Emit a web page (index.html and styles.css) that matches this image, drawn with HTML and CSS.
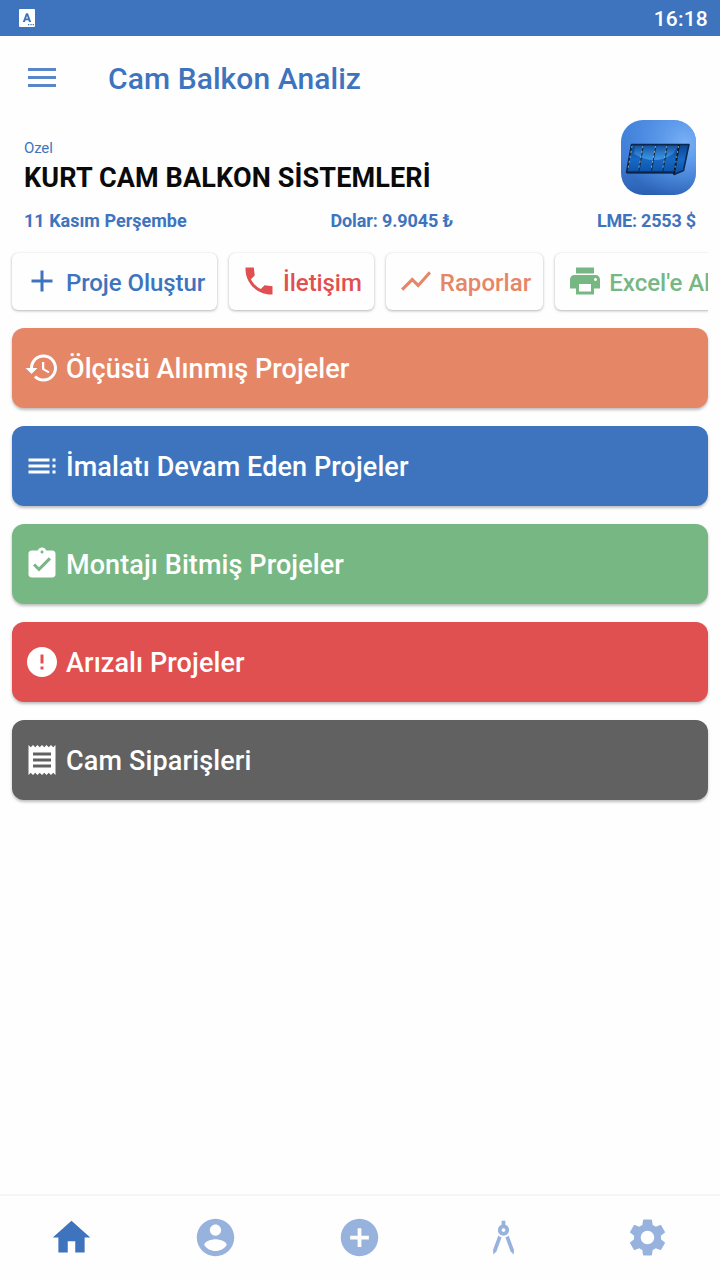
FILE: index.html
```html
<!DOCTYPE html>
<html lang="tr">
<head>
<meta charset="utf-8">
<title>Cam Balkon Analiz</title>
<link rel="stylesheet" href="styles.css">
</head>
<body>
<div class="statusbar">
  <svg class="status-icon" viewBox="0 0 16 18"><rect width="16" height="18" rx="1" fill="#fff"/><path d="M3.800 13 7 4.300h2L12.200 13h-2.200l-.6-1.800H6.600L6 13zM7.100 9.600H8.900L8 6.900z" fill="#3e74be"/><path d="M9 15.700h1.300M11.400 15.700h1.300M13.700 15.700H15" stroke="#3e74be" stroke-width="1.300"/></svg>
  <span class="clock">16:18</span>
</div>
<header class="appbar">
  <svg class="menu" viewBox="0 0 28 19"><path d="M0 0h28v3H0zM0 8h28v3H0zM0 16h28v3H0z"/></svg>
  <h1 class="title">Cam Balkon Analiz</h1>
</header>
<main class="content">
  <section class="company">
    <div class="company-text">
      <div class="plan">Ozel</div>
      <div class="name">KURT CAM BALKON SİSTEMLERİ</div>
    </div>
    <svg class="logo" viewBox="0 0 75 75">
      <defs>
        <linearGradient id="base" x1="0" y1="0" x2="0" y2="1"><stop offset="0" stop-color="#4584da"/><stop offset=".5" stop-color="#4080da"/><stop offset="1" stop-color="#2a60b2"/></linearGradient>
        <radialGradient id="glow" cx=".85" cy=".3" r=".8"><stop offset="0" stop-color="#7ab0f6"/><stop offset="1" stop-color="#5a9cf0" stop-opacity="0"/></radialGradient>
        <linearGradient id="glass" x1="0" y1="0" x2="0" y2="1"><stop offset="0" stop-color="#0d448f"/><stop offset=".5" stop-color="#1769c5"/><stop offset="1" stop-color="#0b4fa5"/></linearGradient>
        <linearGradient id="shine" x1="0" y1="0" x2="0" y2="1"><stop offset="0" stop-color="#4ba5ed" stop-opacity=".15"/><stop offset="1" stop-color="#4ba5ed" stop-opacity=".75"/></linearGradient>
      </defs>
      <rect width="75" height="75" rx="22" fill="url(#base)"/>
      <rect width="75" height="75" rx="22" fill="url(#glow)"/>
      <path d="M10.500 24.500H68L62.500 50.500 53 54.500 52 52.500H5.500z" fill="url(#glass)" stroke="#0a2750" stroke-width="1.500" stroke-linejoin="round"/>
      <path d="M14 26H57L52 34Q34 46 13 34z" fill="url(#shine)"/>
      <path d="M6 52.500H52" stroke="#0b2444" stroke-width="1.800"/>
      <path d="M10.500 25 6.500 50M22.500 25 18 51M35 25 30.500 51M46.500 25 42 51" stroke="#0a2548" stroke-width="1" fill="none"/>
      <path d="M58 25 53 54" stroke="#061932" stroke-width="1.800" fill="none"/>
      <path d="M11 26 7 49M22 26 17.500 50M34.500 26 30 50M46 26 41.500 50M57.500 26 53.500 51" stroke="#d8d5a5" stroke-opacity=".8" stroke-width=".9" stroke-dasharray="2 3" fill="none"/>
    </svg>
  </section>
  <section class="rates">
    <span>11 Kasım Perşembe</span>
    <span class="dollar">Dolar: 9.9045 ₺</span>
    <span class="lme">LME: 2553 $</span>
  </section>
  <nav class="chips">
    <a class="chip blue"><svg viewBox="0 0 24 24"><path d="M19 13h-6v6h-2v-6H5v-2h6V5h2v6h6z"/></svg><span>Proje Oluştur</span></a>
    <a class="chip red"><svg viewBox="0 0 24 24"><path d="M21 15.460l-5.270-.61-2.520 2.520c-2.830-1.440-5.150-3.750-6.590-6.590l2.530-2.530L8.540 3H3.030C2.450 13.180 10.820 21.550 21 20.970v-5.510z"/></svg><span>İletişim</span></a>
    <a class="chip orange"><svg viewBox="0 0 24 24"><path d="M3.500 18.490l6-6.010 4 4L22 6.920l-1.410-1.410-7.090 7.970-4-4L2 16.990z"/></svg><span>Raporlar</span></a>
    <a class="chip green"><svg viewBox="0 0 24 24"><path d="M19 8H5c-1.660 0-3 1.340-3 3v6h4v4h12v-4h4v-6c0-1.660-1.340-3-3-3zm-3 11H8v-5h8v5zm3-7c-.55 0-1-.45-1-1s.45-1 1-1 1 .45 1 1-.45 1-1 1zm-1-9H6v4h12V3z"/></svg><span>Excel'e Aktar</span></a>
  </nav>
  <section class="cards">
    <a class="card bg-orange"><svg viewBox="0 0 24 24"><path d="M13 3c-4.970 0-9 4.030-9 9H1l3.890 3.890.07.14L9 12H6c0-3.870 3.130-7 7-7s7 3.130 7 7-3.130 7-7 7c-1.930 0-3.680-.79-4.940-2.060l-1.420 1.420C8.270 19.990 10.510 21 13 21c4.970 0 9-4.030 9-9s-4.030-9-9-9zm-1 5v5l4.280 2.540.72-1.210-3.500-2.080V8H12z"/></svg><span>Ölçüsü Alınmış Projeler</span></a>
    <a class="card bg-blue"><svg viewBox="0 0 24 24"><path d="M3 9h14V7H3v2zm0 4h14v-2H3v2zm0 4h14v-2H3v2zm16 0h2v-2h-2v2zm0-10v2h2V7h-2zm0 6h2v-2h-2v2z"/></svg><span>İmalatı Devam Eden Projeler</span></a>
    <a class="card bg-green"><svg viewBox="0 0 24 24"><path fill-rule="evenodd" d="M19 3h-4.180C14.400 1.840 13.300 1 12 1s-2.400.84-2.820 2H5c-1.100 0-2 .9-2 2v14c0 1.100.9 2 2 2h14c1.100 0 2-.9 2-2V5c0-1.100-.9-2-2-2zm-7 0c.55 0 1 .45 1 1s-.45 1-1 1-1-.45-1-1 .45-1 1-1zm-2 14l-4-4 1.410-1.410L10 14.170l6.590-6.590L18 9l-8 8z"/></svg><span>Montajı Bitmiş Projeler</span></a>
    <a class="card bg-red"><svg viewBox="0 0 24 24"><path d="M12 2C6.480 2 2 6.480 2 12s4.480 10 10 10 10-4.480 10-10S17.520 2 12 2zm1 15h-2v-2h2v2zm0-4h-2V7h2v6z"/></svg><span>Arızalı Projeler</span></a>
    <a class="card bg-gray"><svg viewBox="0 0 24 24"><path d="M18 17H6v-2h12v2zm0-4H6v-2h12v2zm0-4H6V7h12v2zM3 22l1.500-1.500L6 22l1.500-1.500L9 22l1.500-1.500L12 22l1.500-1.500L15 22l1.500-1.500L18 22l1.500-1.500L21 22V2l-1.500 1.500L18 2l-1.500 1.500L15 2l-1.500 1.500L12 2l-1.500 1.500L9 2 7.500 3.500 6 2 4.500 3.500 3 2v20z"/></svg><span>Cam Siparişleri</span></a>
  </section>
</main>
<nav class="tabbar">
  <a class="tab active"><svg viewBox="0 0 24 24"><path d="M10 20v-6h4v6h5v-8h3L12 3 2 12h3v8z"/></svg></a>
  <a class="tab"><svg viewBox="0 0 24 24"><path fill-rule="evenodd" d="M12 2C6.480 2 2 6.480 2 12s4.480 10 10 10 10-4.480 10-10S17.520 2 12 2zm0 3c1.660 0 3 1.340 3 3s-1.340 3-3 3-3-1.340-3-3 1.340-3 3-3zm0 14.200c-2.500 0-4.710-1.280-6-3.220.03-1.990 4-3.080 6-3.080 1.990 0 5.970 1.090 6 3.080-1.290 1.940-3.500 3.220-6 3.220z"/></svg></a>
  <a class="tab"><svg viewBox="0 0 24 24"><path d="M12 2C6.480 2 2 6.480 2 12s4.480 10 10 10 10-4.480 10-10S17.520 2 12 2zm5 11h-4v4h-2v-4H7v-2h4V7h2v4h4v2z"/></svg></a>
  <a class="tab"><svg viewBox="0 0 24 24"><path fill-rule="evenodd" d="M6.360 18.780L6.610 21l1.620-1.540 2.770-7.600c-.68-.17-1.280-.51-1.770-.98l-2.870 7.900zM14.770 10.880c-.49.47-1.100.81-1.770.98l2.770 7.600L17.390 21l.25-2.220-2.870-7.900zM15 8c0-1.300-.84-2.400-2-2.820V3h-2v2.180C9.840 5.600 9 6.700 9 8c0 1.660 1.340 3 3 3s3-1.340 3-3zM12 9c-.55 0-1-.45-1-1s.45-1 1-1 1 .45 1 1-.45 1-1 1z"/></svg></a>
  <a class="tab"><svg viewBox="0 0 24 24"><path d="M19.140 12.940c.04-.3.06-.61.06-.94 0-.32-.02-.64-.07-.94l2.030-1.580c.18-.14.23-.41.12-.61l-1.920-3.320c-.12-.22-.37-.29-.59-.22l-2.390.96c-.5-.38-1.030-.7-1.620-.94l-.36-2.540c-.04-.24-.24-.41-.48-.41h-3.840c-.24 0-.43.17-.47.41l-.36 2.540c-.59.24-1.130.57-1.620.94l-2.390-.96c-.22-.08-.47 0-.59.22L2.740 8.870c-.12.21-.08.47.12.61l2.030 1.580c-.05.3-.09.63-.09.94s.02.64.07.94l-2.030 1.580c-.18.14-.23.41-.12.61l1.920 3.320c.12.22.37.29.59.22l2.390-.96c.5.38 1.030.7 1.620.94l.36 2.540c.05.24.24.41.48.41h3.840c.24 0 .44-.17.47-.41l.36-2.540c.59-.24 1.130-.56 1.620-.94l2.390.96c.22.08.47 0 .59-.22l1.920-3.320c.12-.22.07-.47-.12-.61l-2.010-1.580zM12 15.600c-1.980 0-3.600-1.620-3.600-3.600s1.620-3.600 3.600-3.600 3.600 1.620 3.600 3.600-1.620 3.600-3.600 3.600z"/></svg></a>
</nav>
</body>
</html>
```
FILE: styles.css
```css
* { box-sizing: border-box; }
body {
  margin: 0;
  height: 1280px;
  display: flex;
  flex-direction: column;
  overflow: hidden;
  background: #fefefe;
  color: #3e74be;
  font-family: Roboto, "Noto Sans", sans-serif;
}
svg { display: block; flex: none; fill: currentColor; }
.statusbar {
  height: 36px;
  flex: none;
  padding: 0 12px 0 19px;
  display: flex;
  align-items: center;
  justify-content: space-between;
  background: #3e74be;
  color: #fff;
}
.status-icon { width: 16px; height: 18px; }
.clock { font-size: 21px; font-weight: 500; letter-spacing: 0.2px; line-height: 36px; padding-top: 1px; }
.appbar { height: 84px; flex: none; display: flex; align-items: center; padding-left: 28px; }
.menu { width: 28px; height: 19px; margin-bottom: 1px; color: #5886c8; }
.title { margin: 0 0 0 52px; font-size: 30px; font-weight: 500; letter-spacing: 0.07px; line-height: 36px; padding-top: 2px; }
.content { flex: 1; min-height: 0; padding: 0 12px; }
.company { display: flex; justify-content: space-between; height: 75px; padding: 0 12px; }
.company-text { padding-top: 18px; }
.plan { font-size: 15px; letter-spacing: -0.15px; line-height: 20px; }
.name { font-size: 27px; font-weight: 700; letter-spacing: 0.14px; line-height: 32px; margin-top: 4px; color: #0a0a0a; white-space: nowrap; }
.logo { width: 75px; height: 75px; }
.rates {
  display: flex;
  justify-content: space-between;
  padding: 0 12px;
  margin-top: 15px;
  font-size: 18px;
  font-weight: 700;
  line-height: 22px;
}
.dollar { letter-spacing: -0.12px; }
.lme { letter-spacing: -0.2px; }
.chips { display: flex; gap: 12px; overflow: hidden; margin: 17px 0 0 -4px; padding: 4px 0 6px 4px; }
.chip {
  height: 57px;
  flex: none;
  display: flex;
  align-items: center;
  gap: 6px;
  padding: 0 12px;
  border-radius: 6px;
  background: #fefefe;
  box-shadow: 0 1px 3px rgba(0, 0, 0, 0.28), 0 0 1px rgba(0, 0, 0, 0.1);
  font-size: 24px;
  font-weight: 500;
  letter-spacing: -0.08px;
  white-space: nowrap;
}
.chip svg, .card svg { width: 36px; height: 36px; }
.chip svg { margin-bottom: 1px; }
.chip span { padding-top: 3px; }
.blue { color: #3e74be; }
.red { color: #e05050; }
.orange { color: #e58767; letter-spacing: 0.04px; }
.green { color: #77b783; letter-spacing: 0; }
.cards { display: grid; gap: 18px; margin-top: 12px; }
.card {
  height: 80px;
  display: flex;
  align-items: center;
  gap: 6px;
  padding: 0 12px;
  border-radius: 12px;
  color: #fff;
  font-size: 27px;
  font-weight: 500;
  letter-spacing: 0.09px;
  box-shadow: 0 2px 3px rgba(0, 0, 0, 0.26);
}
.card span { padding-top: 2px; }
.bg-orange { background: #e58767; letter-spacing: 0.05px; }
.bg-blue { background: #3e74be; }
.bg-green { background: #77b783; }
.bg-red { background: #e05050; }
.bg-gray { background: #616161; letter-spacing: 0.14px; }
.tabbar {
  height: 86px;
  flex: none;
  display: grid;
  grid-template-columns: repeat(5, 1fr);
  border-top: 2px solid #f5f5f5;
}
.tab { display: flex; align-items: center; justify-content: center; padding: 0 1px 1px 0; color: #97b3dd; }
.tab svg { width: 45px; height: 45px; }
.active { color: #3e74be; }
```
